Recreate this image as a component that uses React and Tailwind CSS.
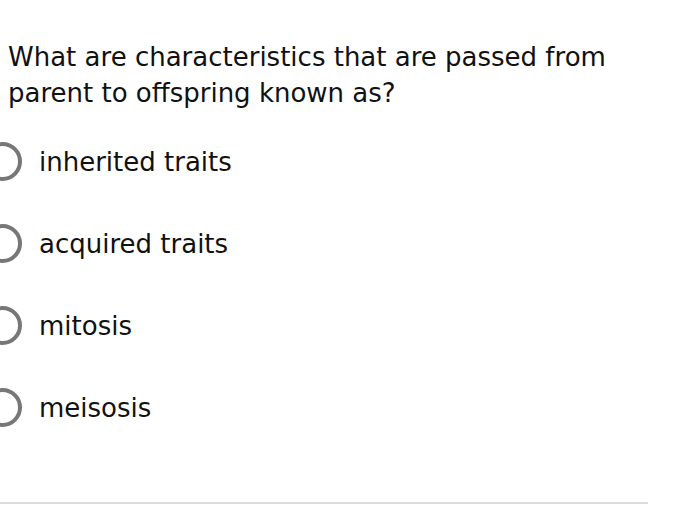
const options = ['inherited traits', 'acquired traits', 'mitosis', 'meisosis']

export default function App() {
  return (
    <div className="w-[680px] h-[512px] bg-white overflow-hidden text-[#111] font-['DejaVu_Sans',Verdana,sans-serif]">
      {/* Question */}
      <p className="pt-[39px] pl-[8px] text-[26px] leading-[36px]">
        What are characteristics that are passed from
        <br />
        parent to offspring known as?
      </p>

      {/* Choices */}
      <div className="mt-[9px] flex flex-col">
        {options.map((opt) => (
          <label key={opt} className="h-[82px] flex items-center">
            <span className="-ml-[17px] w-[39px] h-[39px] shrink-0 rounded-full border-4 border-[#777]" />
            <span className="ml-[17px] pt-[2px] text-[26px]">{opt}</span>
          </label>
        ))}
      </div>

      <div className="mt-[54px] w-[648px] h-[2px] bg-[#dcdcdc]" />
    </div>
  )
}
